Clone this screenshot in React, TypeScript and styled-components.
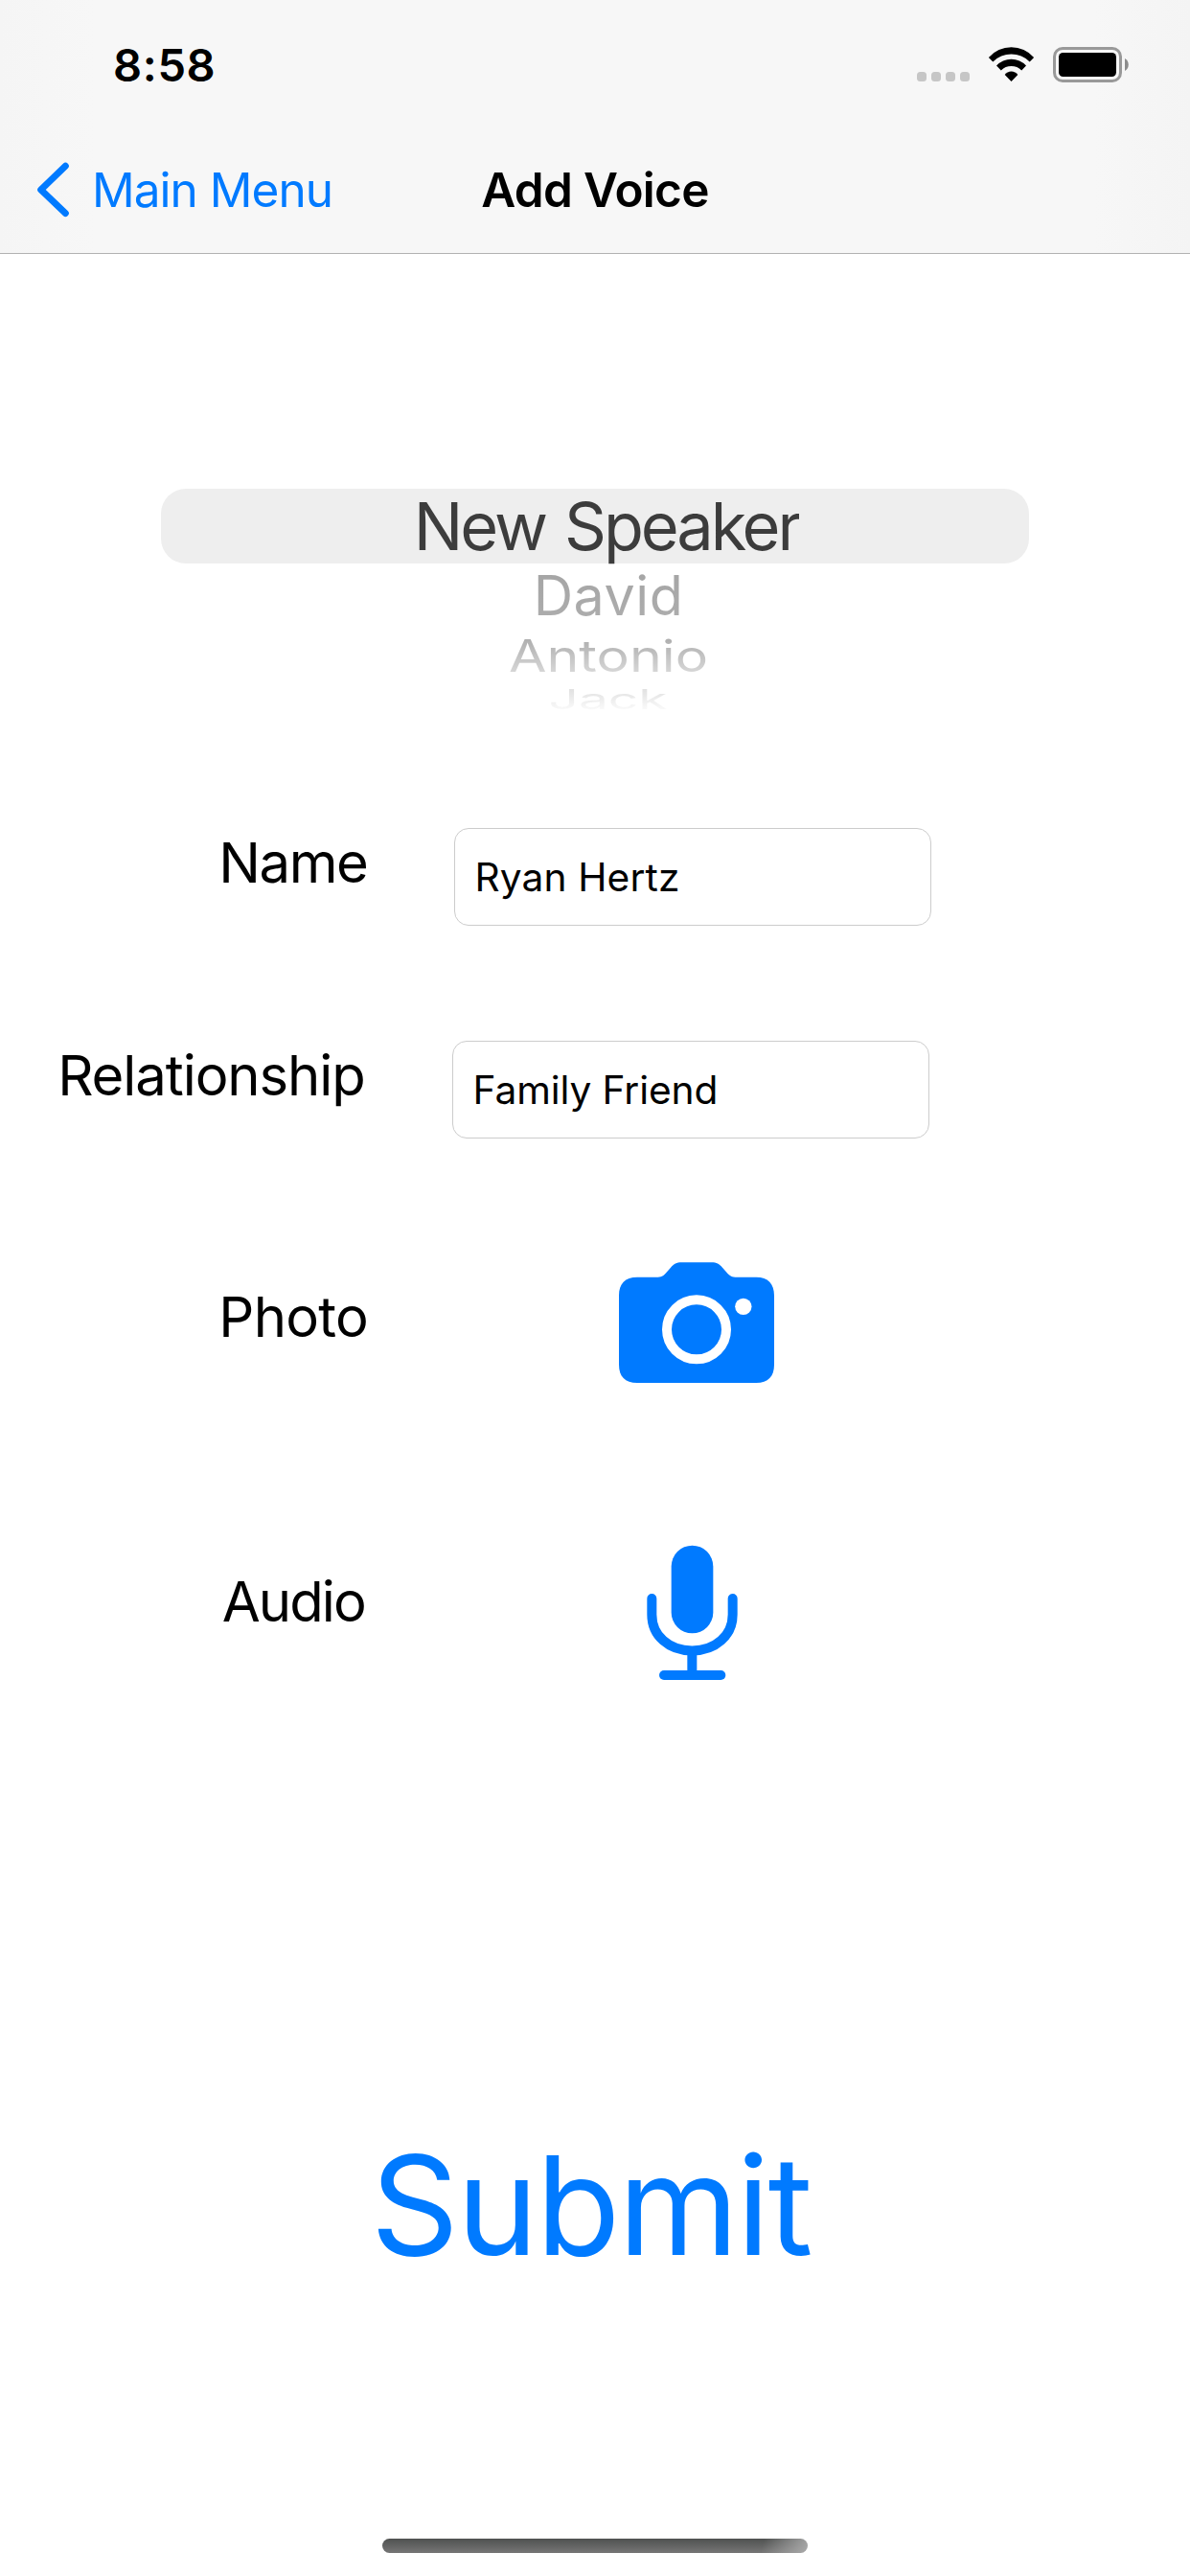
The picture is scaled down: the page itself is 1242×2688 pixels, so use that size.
import React from 'react';
import styled, { createGlobalStyle } from 'styled-components';

const BLUE = '#007aff';

const GlobalStyle = createGlobalStyle`
  body {
    margin: 0;
    background: #ffffff;
  }
`;

const Screen = styled.main`
  box-sizing: border-box;
  display: flex;
  flex-direction: column;
  width: 1242px;
  height: 2688px;
  padding-bottom: 24px;
  overflow: hidden;
  background: #ffffff;
  color: #000000;
  font-family: Inter, "Liberation Sans", sans-serif;
`;

const Header = styled.header`
  border-bottom: 1px solid #b2b2b2;
  background: linear-gradient(to right, #f5f5f5 0, #f7f7f7 8%, #f7f7f7 92%, #f4f4f4 100%);
`;

const StatusBar = styled.div`
  box-sizing: border-box;
  display: flex;
  align-items: center;
  justify-content: space-between;
  height: 132px;
  padding: 4px 64px 0 118px;
`;

const Time = styled.span`
  font-size: 47px;
  font-weight: 600;
  line-height: 60px;
  letter-spacing: 0.66px;
`;

const StatusIcons = styled.div`
  display: flex;
  align-items: flex-start;
  gap: 19px;
  height: 38px;
`;

const CellDots = styled.div`
  display: flex;
  gap: 4.9px;
  margin-top: 26px;
`;

const CellDot = styled.i`
  width: 10.2px;
  height: 10px;
  border-radius: 3.5px;
  background: #c6c6c6;
`;

const NavBar = styled.nav`
  display: grid;
  grid-template-columns: 1fr auto 1fr;
  align-items: center;
  height: 132px;
`;

const BackLink = styled.a`
  display: flex;
  align-items: center;
  gap: 23px;
  padding-left: 38px;
  color: ${BLUE};
  font-size: 49.5px;
  line-height: 62px;
  letter-spacing: -0.97px;
`;

const Title = styled.h1`
  margin: 0;
  font-size: 49.5px;
  font-weight: 600;
  line-height: 62px;
  letter-spacing: -0.7px;
`;

const Picker = styled.section`
  display: flex;
  flex-direction: column;
  width: 906px;
  margin: 245px 0 0 168px;
`;

const PickerRow = styled.div<{ $height: number; $inset: number; $selected?: boolean }>`
  box-sizing: border-box;
  display: flex;
  align-items: center;
  justify-content: center;
  height: ${(p) => p.$height}px;
  padding-top: ${(p) => (p.$selected ? 2 : 0)}px;
  padding-left: ${(p) => p.$inset}px;
  border-radius: 26px;
  background: ${(p) => (p.$selected ? '#eeeeee' : 'transparent')};
`;

const PickerText = styled.span<{
  $size: number;
  $spacing: number;
  $squash: number;
  $from: string;
  $to: string;
}>`
  font-size: ${(p) => p.$size}px;
  line-height: 1.21;
  letter-spacing: ${(p) => p.$spacing}px;
  word-spacing: 4px;
  white-space: nowrap;
  color: transparent;
  background: linear-gradient(${(p) => p.$from} 20%, ${(p) => p.$to} 80%);
  background-clip: text;
  -webkit-background-clip: text;
  transform: scaleY(${(p) => p.$squash});
`;

const Form = styled.section`
  display: flex;
  flex-direction: column;
  margin-top: 117px;
`;

const FormRow = styled.div<{ $gapAbove?: number }>`
  display: flex;
  align-items: flex-start;
  margin-top: ${(p) => p.$gapAbove ?? 0}px;
`;

const Label = styled.span<{ $width: number; $spacing: number; $drop?: number }>`
  width: ${(p) => p.$width}px;
  margin-top: ${(p) => p.$drop ?? 0}px;
  font-size: 58px;
  line-height: 73px;
  letter-spacing: ${(p) => p.$spacing}px;
  text-align: right;
  white-space: nowrap;
`;

const Field = styled.div<{ $gap: number; $spacing: number }>`
  box-sizing: border-box;
  width: 498px;
  height: 102px;
  margin-left: ${(p) => p.$gap}px;
  padding: 0 20.5px;
  border: 1px solid #cccccc;
  border-radius: 15px;
  font-size: 40.7px;
  line-height: 102px;
  letter-spacing: ${(p) => p.$spacing}px;
`;

const IconButton = styled.button<{ $gap: number }>`
  display: block;
  margin: 0 0 0 ${(p) => p.$gap}px;
  padding: 0;
  border: 0;
  background: none;
  color: ${BLUE};

  svg {
    display: block;
  }
`;

const SubmitButton = styled.button`
  align-self: center;
  height: 174px;
  margin: 461px 9px 0 0;
  padding: 0;
  border: 0;
  background: none;
  color: ${BLUE};
  font-family: inherit;
  font-size: 143.5px;
  line-height: 174px;
  letter-spacing: -2.1px;
`;

const HomeIndicator = styled.div`
  flex: none;
  align-self: center;
  width: 444px;
  height: 15px;
  margin-top: auto;
  border-radius: 8px;
  background:
    linear-gradient(105deg, rgba(176, 176, 176, 0) 89%, rgba(176, 176, 176, 0.9) 100%),
    linear-gradient(#4f5150, #767676);
`;

const WifiIcon = () => (
  <svg width="49" height="36" viewBox="0 0 49 36">
    <path d="M0.9 11 A31.4 31.4 0 0 1 48.1 11 L43.7 15.5 A27 27 0 0 0 5.3 15.5 Z" />
    <path d="M9 19.5 A21 21 0 0 1 40 19.5 L35.2 24.4 A15.2 15.2 0 0 0 13.8 24.4 Z" />
    <path d="M17.7 29 A8.4 8.4 0 0 1 31.3 29 L24.5 36 Z" />
  </svg>
);

const BatteryIcon = () => (
  <svg width="79" height="37" viewBox="0 0 79 37">
    <rect x="1.5" y="1.5" width="69" height="34" rx="8.5" fill="none" stroke="#999999" strokeWidth="3" />
    <rect x="6" y="6" width="60" height="25" rx="4.5" />
    <path d="M75 12 A7.5 7.5 0 0 1 75 25 Z" fill="#8c8c8c" />
  </svg>
);

const ChevronIcon = () => (
  <svg width="35" height="60" viewBox="0 0 35 60" fill="none" stroke="currentColor" strokeWidth="7" strokeLinecap="round" strokeLinejoin="round">
    <path d="M30.3 5.3 L4.7 30 L30.3 54.6" />
  </svg>
);

const CameraIcon = () => (
  <svg width="162" height="126" viewBox="78 81 486 378">
    <path
      fill="currentColor"
      d="M135 128 H200 C214 128 219 122 228 112 L240 98 C250 87 258 82 274 82 H368 C384 82 392 87 402 98 L414 112 C423 122 428 128 442 128 H508 C545 128 564 149 564 185 V402 C564 439 545 459 508 459 H135 C97 459 78 439 78 402 V185 C78 149 97 128 135 128 Z"
    />
    <circle cx="321" cy="292" r="93" fill="none" stroke="#ffffff" strokeWidth="30" />
    <circle cx="467.5" cy="220" r="26" fill="#ffffff" />
  </svg>
);

const MicIcon = () => (
  <svg width="95" height="141" viewBox="104 66 285 423">
    <rect x="181" y="68" width="131" height="275" rx="65.5" fill="currentColor" />
    <g fill="none" stroke="currentColor" strokeWidth="30" strokeLinecap="round">
      <path d="M120 234 V284 C120 350 173 397.5 246 397.5 S373 350 373 284 V234" />
      <path d="M246 400 V474" />
      <path d="M158 474 H336" />
    </g>
  </svg>
);

export default function App() {
  return (
    <>
      <GlobalStyle />
      <Screen>
        <Header>
          <StatusBar>
            <Time>8:58</Time>
            <StatusIcons>
              <CellDots>
                <CellDot />
                <CellDot />
                <CellDot />
                <CellDot />
              </CellDots>
              <WifiIcon />
              <BatteryIcon />
            </StatusIcons>
          </StatusBar>
          <NavBar>
            <BackLink>
              <ChevronIcon />
              Main Menu
            </BackLink>
            <Title>Add Voice</Title>
          </NavBar>
        </Header>

        <Picker>
          <PickerRow $height={78} $inset={24} $selected>
            <PickerText $size={68.5} $spacing={-3.1} $squash={1} $from="#3c3c3c" $to="#3c3c3c">
              New Speaker
            </PickerText>
          </PickerRow>
          <PickerRow $height={67} $inset={28}>
            <PickerText $size={57.4} $spacing={0.5} $squash={1} $from="#a6a6a6" $to="#acacac">
              David
            </PickerText>
          </PickerRow>
          <PickerRow $height={59} $inset={28}>
            <PickerText $size={57.3} $spacing={0} $squash={0.8} $from="#b0b0b0" $to="#d6d6d6">
              Antonio
            </PickerText>
          </PickerRow>
          <PickerRow $height={33} $inset={27}>
            <PickerText $size={55.1} $spacing={0} $squash={0.515} $from="#e2e2e2" $to="#fafafa">
              Jack
            </PickerText>
          </PickerRow>
        </Picker>

        <Form>
          <FormRow>
            <Label $width={383.4} $spacing={-1.46}>Name</Label>
            <Field $gap={90.6} $spacing={0.11}>Ryan Hertz</Field>
          </FormRow>
          <FormRow $gapAbove={120}>
            <Label $width={380.7} $spacing={-1.08}>Relationship</Label>
            <Field $gap={91.3} $spacing={-0.09}>Family Friend</Field>
          </FormRow>
          <FormRow $gapAbove={129}>
            <Label $width={384} $spacing={-0.73} $drop={21}>Photo</Label>
            <IconButton $gap={262} aria-label="Photo">
              <CameraIcon />
            </IconButton>
          </FormRow>
          <FormRow $gapAbove={169}>
            <Label $width={380.9} $spacing={-1.89} $drop={23}>Audio</Label>
            <IconButton $gap={293.8} aria-label="Audio">
              <MicIcon />
            </IconButton>
          </FormRow>
        </Form>

        <SubmitButton>Submit</SubmitButton>
        <HomeIndicator />
      </Screen>
    </>
  );
}
